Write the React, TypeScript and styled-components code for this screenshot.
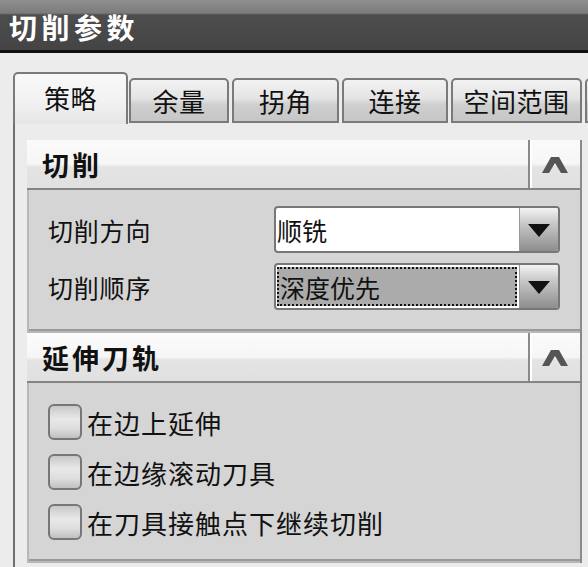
import React from "react";
import styled, { createGlobalStyle } from "styled-components";

const Global = createGlobalStyle`
  html, body { margin: 0; padding: 0; background: #ececec; }
  body { width: 588px; height: 567px; overflow: hidden;
    font-family: "Noto Sans CJK SC", "Noto Sans", sans-serif; color: #111; }
`;

const Window = styled.div`
  width: 588px; height: 567px; display: flex; flex-direction: column;
  background: #ececec; overflow: hidden;
`;

const TitleBar = styled.div`
  height: 53px; flex: none; display: flex; align-items: center;
  padding-left: 9px; padding-top: 3px; box-sizing: border-box;
  background: linear-gradient(to bottom, #8f8f8f 0px, #7c7c7c 13px, #4d4d4d 15px, #444 50px);
  border-bottom: 3px solid #111;
  color: #fff; font-size: 28px; font-weight: 700; letter-spacing: 4.5px;
`;

const Content = styled.div`
  flex: 1; display: flex; flex-direction: column; padding: 19px 0 0 13px; min-height: 0;
`;

const TabRow = styled.div`
  display: flex; align-items: flex-end; height: 51px; flex: none; gap: 3px;
  position: relative; z-index: 1;
`;

const Tab = styled.div<{ $active?: boolean; $w: number }>`
  width: ${p => p.$w}px; flex: none; box-sizing: border-box;
  display: flex; align-items: center; justify-content: center;
  font-size: 26px; letter-spacing: 0.5px; border: 2px solid #7a7a7a; border-radius: 5px 5px 0 0;
  ${p => p.$active ? `
    height: 52px; margin-bottom: -1px; border-bottom: none; margin-right: -2px;
    background: linear-gradient(to bottom, #f8f8f8 0%, #f2f2f2 50%, #e6e6e6 100%);
    padding-bottom: 4px;
  ` : `
    height: 45px;
    background: linear-gradient(to bottom, #f2f2f2 0%, #e4e4e4 45%, #cfcfcf 60%, #c6c6c6 100%);
  `}
`;

const Pane = styled.div`
  flex: 1; border-left: 2px solid #6e6e6e; padding: 17px 0 0 12px;
  display: flex; flex-direction: column; min-height: 0; background: #ececec;
`;

const Panel = styled.div`
  width: 553px; display: flex; flex-direction: column;
  border-right: 2px solid #8a8a8a;
`;

const Header = styled.div`
  height: 50px; display: flex; align-items: stretch; box-sizing: border-box;
  background: linear-gradient(to bottom, #fbfbfb 0%, #f6f6f6 50%, #e4e4e4 56%, #e0e0e0 100%);
  border-bottom: 2px solid #858585;
`;

const HeaderTitle = styled.div`
  flex: 1; display: flex; align-items: center; padding-left: 15px;
  font-size: 27px; font-weight: 700; letter-spacing: 3px;
`;

const Collapse = styled.div`
  width: 50px; display: flex; align-items: center; justify-content: center;
  border-left: 2px solid #8a8a8a; box-shadow: inset 2px 0 0 #fff;
`;

const Body = styled.div<{ $h: number }>`
  height: ${p => p.$h}px; box-sizing: border-box;
  background: #d5d5d5; border: 2px solid #b8b8b8; border-top: none; border-right: none;
  box-shadow: inset 0 -2px 0 #9a9a9a;
  display: flex; flex-direction: column;
`;

const FieldRow = styled.div`
  display: flex; align-items: center; height: 47px;
  padding-left: 19px; padding-right: 20px;
`;

const Label = styled.div`
  flex: 1; font-size: 25px; letter-spacing: 0.8px;
`;

const Select = styled.div`
  width: 286px; height: 47px; box-sizing: border-box; display: flex;
  border: 2px solid #777; border-radius: 4px; background: #fff; overflow: hidden;
`;

const SelectText = styled.div<{ $focus?: boolean }>`
  flex: 1; display: flex; align-items: center; font-size: 25px; padding-left: 1px;
  ${p => p.$focus ? `
    background: #ababab; border: 2px dotted #111; margin: 2px 2px 2px 1px;
  ` : ``}
`;

const DropButton = styled.div`
  width: 38px; display: flex; align-items: center; justify-content: center;
  background: linear-gradient(to bottom, #f4f4f4 0%, #c9c9c9 35%, #8d8d8d 100%);
  border-left: 1px solid #999;
`;

const CheckRow = styled.div`
  display: flex; align-items: center; height: 50px; padding-left: 19px; gap: 5px;
`;

const Box = styled.div`
  width: 34px; height: 36px; box-sizing: border-box;
  border: 2px solid #777; border-radius: 6px;
  background: linear-gradient(to bottom, #c8c8c8 0%, #e8e8e8 40%, #dedede 70%, #c0c0c0 100%);
`;

const CheckText = styled.div`
  font-size: 26px; letter-spacing: 1px;
`;

const Caret = () => (
  <svg width="30" height="22" viewBox="0 0 30 22">
    <polygon points="2,20 11,4 19,4 28,20 21,20 15,10 9,20" fill="#555" />
  </svg>
);

const Down = () => (
  <svg width="24" height="16" viewBox="0 0 24 16">
    <polygon points="1,2 23,2 12,15" fill="#111" />
  </svg>
);

export default function App() {
  const tabs = [
    { t: "策略", w: 115, a: true },
    { t: "余量", w: 100 },
    { t: "拐角", w: 107 },
    { t: "连接", w: 106 },
    { t: "空间范围", w: 131 },
    { t: "", w: 20 },
  ];
  return (
    <Window>
      <Global />
      <TitleBar>切削参数</TitleBar>
      <Content>
        <TabRow>
          {tabs.map((x, i) => (
            <Tab key={i} $active={x.a} $w={x.w}>{x.t}</Tab>
          ))}
        </TabRow>
        <Pane>
          <Panel>
            <Header>
              <HeaderTitle>切削</HeaderTitle>
              <Collapse><Caret /></Collapse>
            </Header>
            <Body $h={143}>
              <div style={{ height: 16 }} />
              <FieldRow>
                <Label>切削方向</Label>
                <Select>
                  <SelectText>顺铣</SelectText>
                  <DropButton><Down /></DropButton>
                </Select>
              </FieldRow>
              <div style={{ height: 10 }} />
              <FieldRow>
                <Label>切削顺序</Label>
                <Select>
                  <SelectText $focus>深度优先</SelectText>
                  <DropButton><Down /></DropButton>
                </Select>
              </FieldRow>
            </Body>
            <Header>
              <HeaderTitle>延伸刀轨</HeaderTitle>
              <Collapse><Caret /></Collapse>
            </Header>
            <Body $h={180}>
              <div style={{ height: 14 }} />
              <CheckRow><Box /><CheckText>在边上延伸</CheckText></CheckRow>
              <CheckRow><Box /><CheckText>在边缘滚动刀具</CheckText></CheckRow>
              <CheckRow><Box /><CheckText>在刀具接触点下继续切削</CheckText></CheckRow>
            </Body>
          </Panel>
        </Pane>
      </Content>
    </Window>
  );
}
